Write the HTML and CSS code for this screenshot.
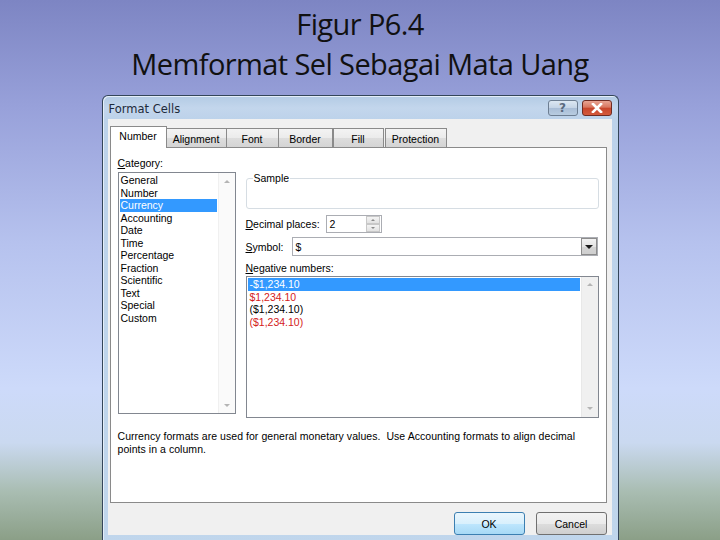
FILE: index.html
```html
<!DOCTYPE html>
<html lang="id">
<head>
    <meta charset="UTF-8">
    <meta name="viewport" content="width=device-width, initial-scale=1.0">
    <title>Figur P6.4</title>
    <link rel="stylesheet" href="styles.css">
</head>
<body>
    <h1 class="slide-title">Figur P6.4<br>Memformat Sel Sebagai Mata Uang</h1>

    <!-- Format Cells dialog -->
    <div class="dialog">
        <div class="titlebar">
            <span class="title">Format Cells</span>
            <span class="cap-btn help">?</span>
            <span class="cap-btn close">
                <svg width="14" height="10" viewBox="0 0 14 10">
                    <path d="M3 1 L11 9 M11 1 L3 9" stroke="#fff" stroke-width="2.6" stroke-linecap="square"/>
                </svg>
            </span>
        </div>

        <div class="client">
            <div class="tabs">
                <span class="tab active w-number">Number</span>
                <span class="tab w-align">Alignment</span>
                <span class="tab w-font">Font</span>
                <span class="tab w-border">Border</span>
                <span class="tab w-fill">Fill</span>
                <span class="tab w-protect">Protection</span>
            </div>

            <div class="panel">
                <div class="panel-grid">
                    <div class="col-left">
                        <div class="label"><u>C</u>ategory:</div>
                        <div class="listbox cat-list">
                            <ul class="items">
                                <li>General</li>
                                <li>Number</li>
                                <li class="selected">Currency</li>
                                <li>Accounting</li>
                                <li>Date</li>
                                <li>Time</li>
                                <li>Percentage</li>
                                <li>Fraction</li>
                                <li>Scientific</li>
                                <li>Text</li>
                                <li>Special</li>
                                <li>Custom</li>
                            </ul>
                            <div class="vscroll">
                                <span class="arrow up"></span>
                                <span class="arrow down"></span>
                            </div>
                        </div>
                    </div>

                    <div class="col-right">
                        <fieldset class="sample">
                            <legend>Sample</legend>
                        </fieldset>

                        <div class="field-row decimal-row">
                            <span class="field-label w-decimal"><u>D</u>ecimal places:</span>
                            <div class="spin">
                                <span class="spin-value">2</span>
                                <span class="spin-btns">
                                    <span class="spin-btn"><span class="tri up"></span></span>
                                    <span class="spin-btn"><span class="tri down"></span></span>
                                </span>
                            </div>
                        </div>

                        <div class="field-row symbol-row">
                            <span class="field-label w-symbol"><u>S</u>ymbol:</span>
                            <div class="combo">
                                <span class="combo-value">$</span>
                                <span class="combo-btn"><span class="tri-dark"></span></span>
                            </div>
                        </div>

                        <div class="label neg-label"><u>N</u>egative numbers:</div>
                        <div class="listbox neg-list">
                            <ul class="items">
                                <li class="selected">-$1,234.10</li>
                                <li class="red">$1,234.10</li>
                                <li>($1,234.10)</li>
                                <li class="red">($1,234.10)</li>
                            </ul>
                            <div class="vscroll gray">
                                <span class="arrow up"></span>
                                <span class="arrow down"></span>
                            </div>
                        </div>
                    </div>
                </div>

                <p class="desc">Currency formats are used for general monetary values.&nbsp; Use Accounting formats to align decimal points in a column.</p>
            </div>

            <div class="buttons">
                <button class="btn default">OK</button>
                <button class="btn">Cancel</button>
            </div>
        </div>
    </div>
</body>
</html>
```

FILE: styles.css
```css
html,
body {
    height: 540px;
    overflow: hidden;
}

body {
    margin: 0;
    font-family: "Liberation Sans", Arial, sans-serif;
    background: linear-gradient(to bottom,
        #7d85c3 0%,
        #98a1da 20%,
        #b6c2ee 45%,
        #cddafa 72%,
        #cad9f0 82%,
        #a9bdb2 91%,
        #8b9f87 100%);
}

.slide-title {
    margin: 0;
    padding-top: 4px;
    height: 81px;
    font-family: "Open Sans", sans-serif;
    font-weight: normal;
    font-size: 29px;
    line-height: 40px;
    letter-spacing: -0.6px;
    text-align: center;
    color: #111;
}

/* dialog frame */
.dialog {
    width: 517px;
    box-sizing: border-box;
    margin: 10px auto 0;
    padding: 0 6px 30px 5px;
    border: 1px solid #34465a;
    border-bottom: none;
    border-radius: 6px 6px 0 0;
    background: linear-gradient(to bottom, #b3cbe5 0px, #c3d6ec 12px, #bcd2ea 24px, #c0d6ec 100%);
    box-shadow: inset 1px 1px 0 #e4eef8;
}

.titlebar {
    height: 23px;
    display: flex;
    align-items: center;
    gap: 4px;
}

.title {
    flex: 1;
    font-family: "DejaVu Sans", sans-serif;
    font-size: 11.5px;
    color: #1d2a3a;
    padding-left: 1px;
    padding-top: 2px;
}

.cap-btn {
    width: 30px;
    height: 16px;
    box-sizing: border-box;
    border: 1px solid #6d7e92;
    border-radius: 3px;
    display: flex;
    align-items: center;
    justify-content: center;
}

.help {
    background: linear-gradient(to bottom, #dce7f2 0%, #c4d4e6 50%, #a9bdd6 51%, #b8cce0 100%);
    color: #5a6a7e;
    font-family: "DejaVu Sans", sans-serif;
    font-size: 12px;
    font-weight: bold;
    line-height: 1;
}

.close {
    border-color: #6e2b22;
    background: linear-gradient(to bottom, #e8a493 0%, #d9765f 45%, #c8452b 50%, #d35a3c 100%);
}

.client {
    background: #f0f0f0;
    padding: 7px 0 0 2px;
    font-size: 10.5px;
    color: #000;
}

/* tabs */
.tabs {
    display: flex;
    align-items: flex-end;
    height: 21px;
}

.tab {
    height: 19px;
    box-sizing: border-box;
    border: 1px solid #8a8a8a;
    border-bottom: none;
    margin-left: -1px;
    background: linear-gradient(to bottom, #f3f3f3 0%, #ebebeb 50%, #dddddd 51%, #d4d4d4 100%);
    display: flex;
    align-items: center;
    justify-content: center;
    padding-top: 1px;
}

.tab.active {
    height: 22px;
    margin-left: 0;
    margin-bottom: -1px;
    background: #fff;
    position: relative;
    z-index: 1;
    padding-top: 0;
    padding-bottom: 3px;
}

.w-number { width: 57px; }
.w-align { width: 61px; }
.w-font { width: 53px; }
.w-border { width: 55px; }
.w-fill { width: 51px; margin-left: 0 !important; }
.w-protect { width: 62px; margin-left: 1px !important; }

.panel {
    width: 497px;
    height: 356px;
    box-sizing: border-box;
    background: #fff;
    border: 1px solid #8a8a8a;
    padding: 8px 7px 0 7px;
}

.panel-grid {
    display: grid;
    grid-template-columns: 118px 353px;
    column-gap: 10px;
}

.label {
    line-height: 14px;
    height: 14px;
}

.col-left .label {
    margin-bottom: 2px;
}

/* list boxes */
.listbox {
    display: flex;
    box-sizing: border-box;
    border: 1px solid #828790;
    background: #fff;
}

.cat-list {
    height: 242px;
}

.neg-list {
    height: 142px;
}

.items {
    list-style: none;
    margin: 0;
    padding: 1px 1px 0 1px;
    flex: 1;
}

.items li {
    height: 12.5px;
    line-height: 12.5px;
    padding-left: 1px;
}

.items li.selected {
    background: #3399ff;
    color: #fff;
}

.neg-list .items li {
    padding-left: 2px;
}

.items li.red {
    color: #d42020;
}

.vscroll {
    width: 16px;
    background: #fafafa;
    border-left: 1px solid #f0f0f0;
    display: flex;
    flex-direction: column;
    justify-content: space-between;
    align-items: center;
    padding: 7px 0 6px;
}

.vscroll.gray {
    background: #f0f0f0;
    border-left-color: #e8e8e8;
    padding: 6px 0 7px;
}

.arrow {
    width: 0;
    height: 0;
    border-left: 3px solid transparent;
    border-right: 3px solid transparent;
}

.arrow.up {
    border-bottom: 3px solid #b4b4b4;
}

.arrow.down {
    border-top: 3px solid #b4b4b4;
}

/* right column */
.sample {
    margin: 16px 0 0 0;
    padding: 0 6px;
    height: 37px;
    box-sizing: border-box;
    border: 1px solid #d6dde3;
    border-radius: 3px;
}

.sample legend {
    padding: 0 1px;
    line-height: 13px;
}

.field-row {
    display: flex;
    align-items: center;
}

.decimal-row {
    margin-top: 6px;
    height: 18px;
}

.symbol-row {
    margin-top: 4px;
    height: 19px;
}

.w-decimal { width: 80px; }
.w-symbol { width: 46px; }

.spin {
    width: 56px;
    height: 18px;
    box-sizing: border-box;
    border: 1px solid #abadb3;
    display: flex;
    align-items: center;
}

.spin-value {
    flex: 1;
    padding-left: 3px;
}

.spin-btns {
    width: 14px;
    height: 16px;
    display: flex;
    flex-direction: column;
    margin-right: 1px;
}

.spin-btn {
    flex: 1;
    box-sizing: border-box;
    border: 1px solid #c8c8c8;
    background: linear-gradient(to bottom, #f4f4f4, #e2e2e2);
    display: flex;
    align-items: center;
    justify-content: center;
}

.tri {
    width: 0;
    height: 0;
    border-left: 2.5px solid transparent;
    border-right: 2.5px solid transparent;
}

.tri.up { border-bottom: 2.5px solid #8a8a8a; }
.tri.down { border-top: 2.5px solid #8a8a8a; }

.combo {
    flex: 1;
    height: 19px;
    box-sizing: border-box;
    border: 1px solid #abadb3;
    display: flex;
    align-items: center;
    margin-right: 1px;
}

.combo-value {
    flex: 1;
    padding-left: 3px;
}

.combo-btn {
    width: 16px;
    height: 17px;
    box-sizing: border-box;
    border: 1px solid #8c8c8c;
    background: linear-gradient(to bottom, #f2f2f2 0%, #e4e4e4 50%, #d4d4d4 51%, #cfcfcf 100%);
    display: flex;
    align-items: center;
    justify-content: center;
}

.tri-dark {
    width: 0;
    height: 0;
    border-left: 4px solid transparent;
    border-right: 4px solid transparent;
    border-top: 4px solid #1a1a1a;
    margin-top: 1px;
}

.neg-label {
    margin-top: 5px;
    margin-bottom: 1px;
}

.desc {
    margin: 12px 0 0 0;
    width: 462px;
    line-height: 13px;
    font-size: 10.5px;
    letter-spacing: 0.05px;
}

/* buttons */
.buttons {
    display: flex;
    justify-content: flex-end;
    gap: 11px;
    width: 497px;
    margin-top: 9px;
}

.btn {
    width: 71px;
    height: 23px;
    font-family: "Liberation Sans", Arial, sans-serif;
    font-size: 10.5px;
    color: #000;
    border: 1px solid #707070;
    border-radius: 3px;
    background: linear-gradient(to bottom, #f2f2f2 0%, #ebebeb 50%, #dddddd 51%, #cfcfcf 100%);
    padding: 0;
}

.btn.default {
    border-color: #3c7fb1;
    background: linear-gradient(to bottom, #eaf6fd 0%, #d9f0fc 50%, #bee6fd 51%, #a7d9f5 100%);
}
```
